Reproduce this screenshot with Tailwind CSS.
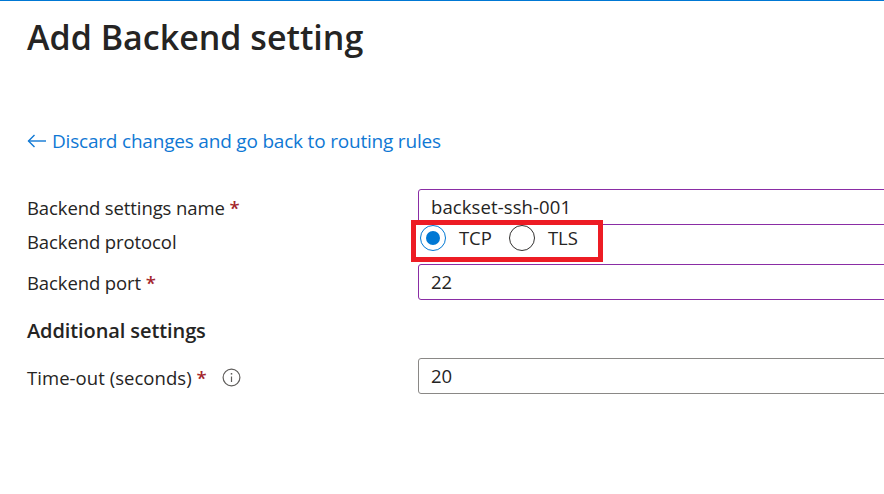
<!DOCTYPE html>
<html lang="en">
<head>
    <meta charset="UTF-8">
    <title>Add Backend setting</title>
    <script src="https://cdn.jsdelivr.net/npm/@tailwindcss/browser@4"></script>
</head>
<body class="bg-white overflow-hidden font-['Open_Sans',sans-serif] text-[#252423]">
    <div class="relative w-[884px] h-[494px] overflow-hidden border-t border-[#0078d4]">
        <h1 class="pl-[27px] pt-[13px] h-[120px] text-[34px] leading-[46px] font-semibold">Add Backend setting</h1>

        <a href="#" class="flex items-center pl-[27px] h-[68px] pb-[28px] text-[19px] text-[#0f78d4] tracking-[-0.2px]">
            <svg class="mr-[6px] shrink-0" width="19" height="14" viewBox="0 0 19 14" fill="none" stroke="#0f78d4" stroke-width="1.4"><path d="M19 7H1.5"/><path d="M7.5 1 1.5 7l6 6"/></svg>
            Discard changes and go back to routing rules
        </a>

        <form class="pl-[27px] text-[18.5px] tracking-[-0.1px]">
            <!-- Name -->
            <div class="flex items-center h-[36px]">
                <label class="w-[391px] shrink-0 pt-[2px]">Backend settings name <span class="text-[#a4262c] font-semibold">*</span></label>
                <div class="w-[500px] h-[36px] shrink-0 pl-[12px] flex items-center border border-[#8a2da5] rounded-[3px] tracking-[0.1px]">backset-ssh-001</div>
            </div>
            <!-- Protocol -->
            <div class="flex items-center h-[39px]">
                <label class="w-[391px] shrink-0 pb-[6px]">Backend protocol</label>
                <div class="flex items-center pl-[2px] pb-[13px]">
                    <span class="w-[26px] h-[26px] rounded-full border border-[#0078d4] flex items-center justify-center"><span class="w-[14px] h-[14px] rounded-full bg-[#0078d4]"></span></span>
                    <span class="ml-[13px] w-[50px]">TCP</span>
                    <span class="w-[26px] h-[26px] rounded-full border border-[#323130]"></span>
                    <span class="ml-[13px]">TLS</span>
                </div>
            </div>
            <!-- Port -->
            <div class="flex items-center h-[36px]">
                <label class="w-[391px] shrink-0 pt-[2px]">Backend port <span class="text-[#a4262c] font-semibold">*</span></label>
                <div class="w-[500px] h-[36px] shrink-0 pl-[12px] flex items-center border border-[#8a2da5] rounded-[3px]">22</div>
            </div>

            <h2 class="h-[58px] text-[20px] leading-[62px] font-semibold">Additional settings</h2>

            <!-- Time-out -->
            <div class="flex items-center h-[36px]">
                <label class="w-[391px] shrink-0 pt-[3px] flex items-center tracking-[0.05px]">Time-out (seconds)&nbsp;<span class="text-[#a4262c] font-semibold">*</span>
                    <svg class="ml-[15px] -mt-[1px]" width="19" height="19" viewBox="0 0 19 19" fill="none" stroke="#605e5c" stroke-width="1.2"><circle cx="9.5" cy="9.5" r="8.4"/><path d="M9.5 8.5v5.5"/><path d="M9.5 5v1.6" stroke-width="1.5"/></svg>
                </label>
                <div class="w-[500px] h-[36px] shrink-0 pl-[12px] flex items-center border border-[#8a8886] rounded-[3px]">20</div>
            </div>
        </form>

        <!-- red annotation box -->
        <div class="absolute left-[411px] top-[219px] w-[192px] h-[42px] border-[5px] border-[#ed1c24]"></div>
    </div>
</body>
</html>
